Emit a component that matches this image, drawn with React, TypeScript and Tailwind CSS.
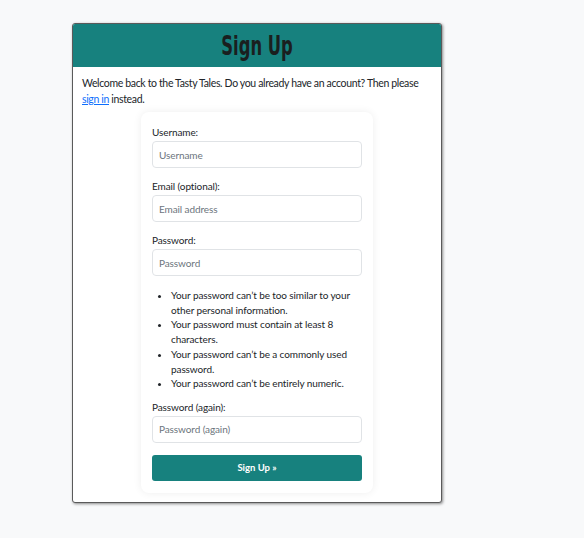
export default function App() {
  const rules = [
    "Your password can’t be too similar to your other personal information.",
    "Your password must contain at least 8 characters.",
    "Your password can’t be a commonly used password.",
    "Your password can’t be entirely numeric.",
  ];

  const field = (label: string, placeholder: string, type = "text") => (
    <div className="flex flex-col">
      <label className="text-[10px] leading-[16px] mb-px tracking-[-0.1px] text-[#212529]">{label}</label>
      <input
        type={type}
        placeholder={placeholder}
        className="h-[27px] w-full rounded-[4px] border border-[#e0e3e6] bg-white px-[6px] text-[10px] tracking-[-0.1px] text-[#212529] placeholder:text-[#6c757d] outline-none"
      />
    </div>
  );

  return (
    <div className="min-h-[538px] bg-[#f8f9fa] pl-[72px] pt-[23px] font-['Lato','Open_Sans',sans-serif] text-[#212529]">
      <div className="w-[370px] rounded-[3px] border border-[#5a5a5a] bg-white shadow-[1px_1px_3px_rgba(0,0,0,0.45)] overflow-hidden">
        <div className="h-[43px] bg-[#17817e] flex items-center justify-center">
          <h1 className="inline-block scale-x-[0.7] text-[26px] leading-none font-bold font-['DejaVu_Sans_Condensed','DejaVu_Sans',sans-serif] text-[#1a1f1f]">
            Sign Up
          </h1>
        </div>
        <div className="px-[9px] pt-[9px] pb-[9px]">
          <p className="text-[10.5px] leading-[15.5px] tracking-[-0.35px] mb-[5px]">
            Welcome back to the Tasty Tales. Do you already have an account? Then please{" "}
            <a href="#" className="text-[#0d6efd] underline">sign in</a> instead.
          </p>
          <form className="mx-auto w-[232px] rounded-[8px] bg-white px-[11px] pt-[12px] pb-[12px] shadow-[0_0_8px_rgba(0,0,0,0.07)] flex flex-col">
            <div className="mb-[10px]">{field("Username:", "Username")}</div>
            <div className="mb-[10px]">{field("Email (optional):", "Email address", "email")}</div>
            {field("Password:", "Password", "password")}
            <ul className="mt-[12px] mb-[8px] list-disc pl-[19px] text-[10px] leading-[14.7px] tracking-[-0.1px]">
              {rules.map((r) => (
                <li key={r}>{r}</li>
              ))}
            </ul>
            {field("Password (again):", "Password (again)", "password")}
            <button
              type="button"
              className="mt-[12px] h-[26px] w-full rounded-[3px] bg-[#17817e] text-[9.5px] font-bold text-white"
            >
              Sign Up »
            </button>
          </form>
        </div>
      </div>
    </div>
  );
}
